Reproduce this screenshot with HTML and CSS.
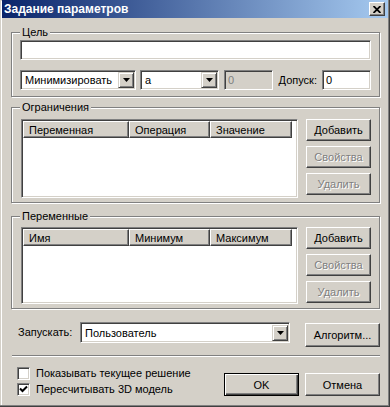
FILE: index.html
```html
<!DOCTYPE html>
<html lang="ru">
<head>
    <meta charset="UTF-8">
    <meta name="viewport" content="width=device-width, initial-scale=1.0">
    <title>Задание параметров</title>
    <link rel="stylesheet" href="styles.css">
</head>
<body>
    <div class="window">
        <div class="titlebar">
            <span class="title">Задание параметров</span>
            <span class="close">
                <svg width="8" height="7" viewBox="0 0 8 7"><path d="M0.5 0 L7.5 7 M7.5 0 L0.5 7" stroke="#000" stroke-width="1.8"/></svg>
            </span>
        </div>

        <fieldset class="group goal">
            <legend>Цель</legend>
            <div class="field wide"></div>
            <div class="goal-row">
                <div class="combo combo-mode">
                    <span class="combo-text">Минимизировать</span>
                    <span class="combo-btn"><svg width="7" height="4" viewBox="0 0 7 4"><polygon points="0,0 7,0 3.5,4" fill="#000"/></svg></span>
                </div>
                <div class="combo combo-var">
                    <span class="combo-text">a</span>
                    <span class="combo-btn"><svg width="7" height="4" viewBox="0 0 7 4"><polygon points="0,0 7,0 3.5,4" fill="#000"/></svg></span>
                </div>
                <div class="field small disabled">0</div>
                <span class="tol-label">Допуск:</span>
                <div class="field small">0</div>
            </div>
        </fieldset>

        <fieldset class="group limits">
            <legend>Ограничения</legend>
            <div class="list-row">
                <div class="listview tall">
                    <div class="lv-head">
                        <span class="col-a">Переменная</span>
                        <span class="col-b">Операция</span>
                        <span class="col-c">Значение</span>
                    </div>
                </div>
                <div class="side">
                    <div class="btn">Добавить</div>
                    <div class="btn off">Свойства</div>
                    <div class="btn off">Удалить</div>
                </div>
            </div>
        </fieldset>

        <fieldset class="group vars">
            <legend>Переменные</legend>
            <div class="list-row">
                <div class="listview">
                    <div class="lv-head">
                        <span class="col-a">Имя</span>
                        <span class="col-b">Минимум</span>
                        <span class="col-c">Максимум</span>
                    </div>
                </div>
                <div class="side">
                    <div class="btn">Добавить</div>
                    <div class="btn off">Свойства</div>
                    <div class="btn off">Удалить</div>
                </div>
            </div>
        </fieldset>

        <div class="run-row">
            <span class="run-label">Запускать:</span>
            <div class="combo combo-run">
                <span class="combo-text">Пользователь</span>
                <span class="combo-btn"><svg width="7" height="4" viewBox="0 0 7 4"><polygon points="0,0 7,0 3.5,4" fill="#000"/></svg></span>
            </div>
            <div class="btn wide-btn">Алгоритм...</div>
        </div>

        <div class="separator"></div>

        <div class="bottom">
            <div class="checks">
                <div class="check-row"><span class="cb"></span>Показывать текущее решение</div>
                <div class="check-row">
                    <span class="cb"><svg width="9" height="9" viewBox="0 0 9 9"><polyline points="1,3.5 3.5,6 8,1.5" fill="none" stroke="#000" stroke-width="2"/></svg></span>
                    Пересчитывать 3D модель
                </div>
            </div>
            <div class="actions">
                <div class="btn wide-btn default">OK</div>
                <div class="btn wide-btn">Отмена</div>
            </div>
        </div>
    </div>
</body>
</html>
```

FILE: styles.css
```css
body {
    margin: 0;
    font-family: "Liberation Sans", Arial, sans-serif;
    font-size: 11px;
    color: #000;
}

.window {
    width: 390px;
    height: 407px;
    box-sizing: border-box;
    padding: 0 3px;
    background-color: #d4d0c8;
    box-shadow: inset -1px -1px #404040, inset -2px -2px #808080, inset 1px 1px #d4d0c8, inset 2px 2px #fff;
    overflow: hidden;
}

.titlebar {
    display: flex;
    align-items: center;
    justify-content: space-between;
    height: 18px;
    margin: 0 -1px;
    padding: 0 3px 0 2px;
    background: linear-gradient(to right, #0a246a, #a6caf0);
}

.title {
    color: #fff;
    font-weight: bold;
    font-size: 12px;
}

.close {
    display: flex;
    align-items: center;
    justify-content: center;
    width: 16px;
    height: 14px;
    box-sizing: border-box;
    background-color: #d4d0c8;
    border: 1px solid;
    border-color: #fff #404040 #404040 #fff;
    box-shadow: inset -1px -1px #808080;
}

/* group boxes */
.group {
    margin: 8px 7px 0 8px;
    padding: 1px 8px 6px;
    border: 1px solid #808080;
    box-shadow: inset 1px 1px #fff, 1px 1px #fff;
    min-width: 0;
}

.group legend {
    padding: 0 2px;
    line-height: 13px;
    background-color: #d4d0c8;
}

.limits {
    margin-top: 4px;
    padding: 5px 8px 4px;
}

.vars {
    margin-top: 7px;
    padding: 4px 8px 4px;
}

/* sunken fields */
.field {
    display: flex;
    align-items: center;
    box-sizing: border-box;
    height: 20px;
    padding: 0 3px;
    background-color: #fff;
    border: 1px solid;
    border-color: #808080 #fff #fff #808080;
    box-shadow: inset 1px 1px #404040, inset -1px -1px #d4d0c8;
}

.field.small {
    width: 49px;
}

.field.disabled {
    background-color: #d4d0c8;
    color: #808080;
}

.goal-row {
    display: flex;
    align-items: center;
    margin-top: 10px;
}

.tol-label {
    margin-left: auto;
    margin-right: 5px;
}

/* combo boxes */
.combo {
    display: flex;
    align-items: center;
    box-sizing: border-box;
    height: 20px;
    padding: 1px;
    background-color: #fff;
    border: 1px solid;
    border-color: #808080 #fff #fff #808080;
    box-shadow: inset 1px 1px #404040, inset -1px -1px #d4d0c8;
}

.combo-text {
    flex: 1;
    padding-left: 3px;
}

.combo-btn {
    display: flex;
    align-items: center;
    justify-content: center;
    width: 16px;
    height: 16px;
    box-sizing: border-box;
    background-color: #d4d0c8;
    border: 1px solid;
    border-color: #d4d0c8 #404040 #404040 #d4d0c8;
    box-shadow: inset 1px 1px #fff, inset -1px -1px #808080;
}

.combo-mode {
    width: 116px;
    margin-right: 4px;
}

.combo-var {
    width: 79px;
    margin-right: 5px;
}

.combo-run {
    width: 210px;
    height: 21px;
}

/* list views */
.list-row {
    display: flex;
    justify-content: space-between;
}

.listview {
    width: 277px;
    height: 77px;
    margin-left: 1px;
    box-sizing: border-box;
    background-color: #fff;
    border: 1px solid;
    border-color: #808080 #fff #fff #808080;
    box-shadow: inset 1px 1px #404040, inset -1px -1px #d4d0c8;
    padding: 1px;
}

.listview.tall {
    height: 79px;
}

.lv-head {
    display: flex;
    height: 17px;
}

.lv-head span {
    display: flex;
    align-items: center;
    box-sizing: border-box;
    padding-left: 5px;
    background-color: #d4d0c8;
    border: 1px solid;
    border-color: #fff #404040 #404040 #fff;
    box-shadow: inset -1px -1px #808080;
}

.col-a {
    width: 106px;
}

.col-b {
    width: 81px;
}

.col-c {
    width: 82px;
}

.side {
    display: flex;
    flex-direction: column;
    gap: 5px;
    width: 65px;
}

/* buttons */
.btn {
    display: flex;
    align-items: center;
    justify-content: center;
    height: 22px;
    box-sizing: border-box;
    background-color: #d4d0c8;
    border: 1px solid;
    border-color: #fff #404040 #404040 #fff;
    box-shadow: inset -1px -1px #808080;
}

.btn.off {
    color: #808080;
    text-shadow: 1px 1px #fff;
}

.wide-btn {
    width: 75px;
    height: 23px;
}

.btn.default {
    border-color: #000;
    box-shadow: inset 1px 1px #fff, inset -1px -1px #404040, inset -2px -2px #808080;
}

/* bottom part */
.run-row {
    display: flex;
    align-items: flex-start;
    margin-top: 13px;
    padding: 0 7px 0 15px;
}

.run-label {
    width: 62px;
    line-height: 21px;
}

.run-row .wide-btn {
    height: 24px;
    margin-top: 1px;
    margin-left: auto;
}

.separator {
    margin: 8px 7px 0 9px;
    border-top: 1px solid #808080;
    border-bottom: 1px solid #fff;
}

.bottom {
    display: flex;
    padding: 0 7px 0 14px;
}

.checks {
    margin-top: 8px;
}

.check-row {
    display: flex;
    align-items: center;
    height: 16px;
}

.cb {
    display: flex;
    align-items: center;
    justify-content: center;
    width: 13px;
    height: 13px;
    margin-right: 6px;
    box-sizing: border-box;
    background-color: #fff;
    border: 1px solid;
    border-color: #808080 #fff #fff #808080;
    box-shadow: inset 1px 1px #404040, inset -1px -1px #d4d0c8;
}

.actions {
    display: flex;
    gap: 6px;
    margin-top: 16px;
    margin-left: auto;
}
```
